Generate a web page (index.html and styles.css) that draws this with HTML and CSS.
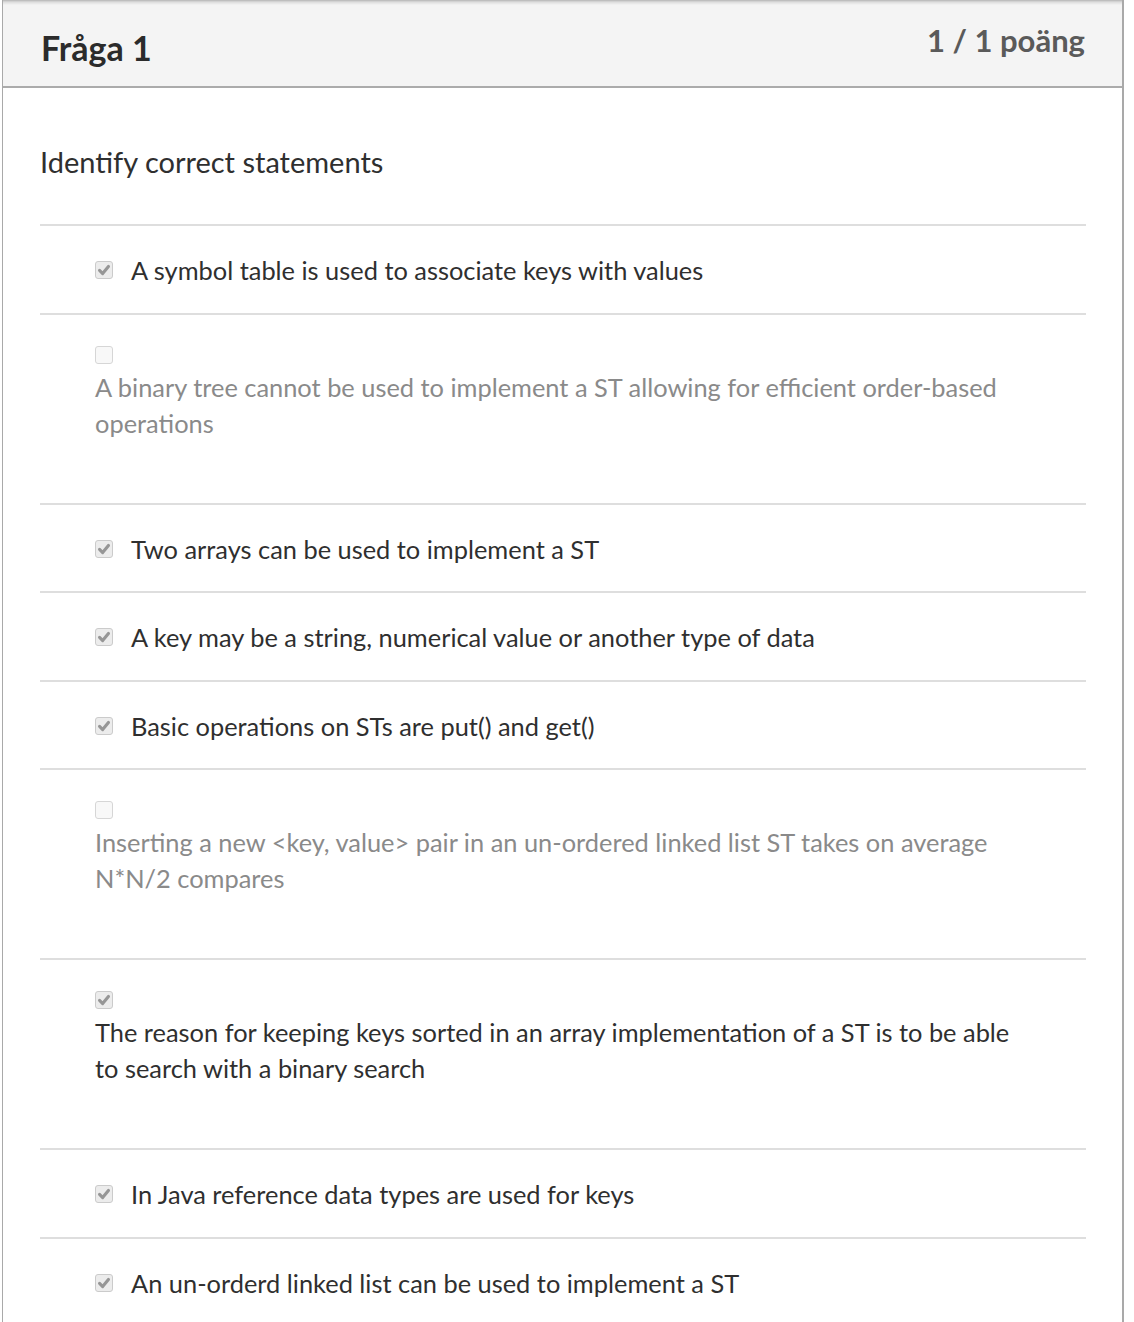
FILE: index.html
```html
<!DOCTYPE html>
<html lang="sv">
<head>
<meta charset="utf-8">
<title>Fråga 1</title>
<link rel="stylesheet" href="styles.css">
</head>
<body>
<div class="question">
  <div class="header">
    <h2 class="title">Fråga 1</h2>
    <div class="points">1 / 1 poäng</div>
  </div>
  <div class="body">
    <div class="prompt">Identify correct statements</div>
    <div class="answers">
      <div class="answer">
        <span class="cb checked"><svg viewBox="0 0 18 18"><path d="M4 9.5 L7.5 13 L14 5"/></svg></span>
        <span class="text">A symbol table is used to associate keys with values</span>
      </div>
      <div class="answer wrap muted">
        <div class="cb-line"><span class="cb"></span></div>
        <div class="text">A binary tree cannot be used to implement a ST allowing for efficient order-based operations</div>
      </div>
      <div class="answer">
        <span class="cb checked"><svg viewBox="0 0 18 18"><path d="M4 9.5 L7.5 13 L14 5"/></svg></span>
        <span class="text">Two arrays can be used to implement a ST</span>
      </div>
      <div class="answer">
        <span class="cb checked"><svg viewBox="0 0 18 18"><path d="M4 9.5 L7.5 13 L14 5"/></svg></span>
        <span class="text">A key may be a string, numerical value or another type of data</span>
      </div>
      <div class="answer">
        <span class="cb checked"><svg viewBox="0 0 18 18"><path d="M4 9.5 L7.5 13 L14 5"/></svg></span>
        <span class="text">Basic operations on STs are put() and get()</span>
      </div>
      <div class="answer wrap muted">
        <div class="cb-line"><span class="cb"></span></div>
        <div class="text">Inserting a new &lt;key, value&gt; pair in an un-ordered linked list ST takes on average N*N/2 compares</div>
      </div>
      <div class="answer wrap">
        <div class="cb-line"><span class="cb checked"><svg viewBox="0 0 18 18"><path d="M4 9.5 L7.5 13 L14 5"/></svg></span></div>
        <div class="text">The reason for keeping keys sorted in an array implementation of a ST is to be able to search with a binary search</div>
      </div>
      <div class="answer">
        <span class="cb checked"><svg viewBox="0 0 18 18"><path d="M4 9.5 L7.5 13 L14 5"/></svg></span>
        <span class="text">In Java reference data types are used for keys</span>
      </div>
      <div class="answer">
        <span class="cb checked"><svg viewBox="0 0 18 18"><path d="M4 9.5 L7.5 13 L14 5"/></svg></span>
        <span class="text">An un-orderd linked list can be used to implement a ST</span>
      </div>
    </div>
  </div>
</div>
</body>
</html>
```

FILE: styles.css
```css
html, body {
  margin: 0;
  padding: 0;
  background: #fff;
}
body {
  font-family: Lato, "Noto Sans", sans-serif;
  color: #2f2f2f;
}
.question {
  margin-left: 2px;
  width: 1119px;
  border-left: 1px solid #a9a9a9;
  border-right: 2px solid #a9a9a9;
  min-height: 1322px;
}
.header {
  box-sizing: border-box;
  height: 88px;
  background: linear-gradient(to bottom, #b4b4b4 0px, #dcdcdc 2px, #f4f4f4 5px, #f4f4f4 100%);
  border-bottom: 2px solid #ababab;
  display: flex;
  justify-content: space-between;
  align-items: flex-start;
  padding: 0 37px 0 38px;
}
.title {
  margin: 30px 0 0 0;
  font-size: 34px;
  line-height: 36px;
  font-weight: 700;
  color: #2b2b2b;
}
.points {
  margin-top: 22px;
  font-size: 31px;
  line-height: 36px;
  font-weight: 700;
  color: #5a5a5a;
}
.body {
  padding: 0 36px 0 37px;
}
.prompt {
  margin-top: 56px;
  font-size: 29px;
  line-height: 36px;
  margin-bottom: 44px;
}
.answer {
  border-top: 2px solid #dedede;
  padding: 26px 0 24.5px 55px;
  font-size: 25.4px;
  line-height: 36px;
  display: flex;
  align-items: center;
  gap: 18px;
}
.answer.wrap {
  display: block;
  padding-bottom: 62px;
}
.answer.muted .text {
  color: #8a8a8a;
}
.answer.wrap .text {
  max-width: 925px;
}
.cb-line {
  height: 28px;
  display: flex;
  align-items: center;
}
.cb {
  box-sizing: border-box;
  width: 18px;
  height: 18px;
  border: 1px solid #d6d6d6;
  border-radius: 3px;
  background: #f8f8f8;
  display: inline-flex;
  flex: none;
}
.cb.checked {
  background: #ececec;
  border-color: #cbcbcb;
}
.cb svg {
  width: 16px;
  height: 16px;
}
.cb svg path {
  fill: none;
  stroke: #969696;
  stroke-width: 3.5;
  stroke-linecap: round;
  stroke-linejoin: round;
}
```
